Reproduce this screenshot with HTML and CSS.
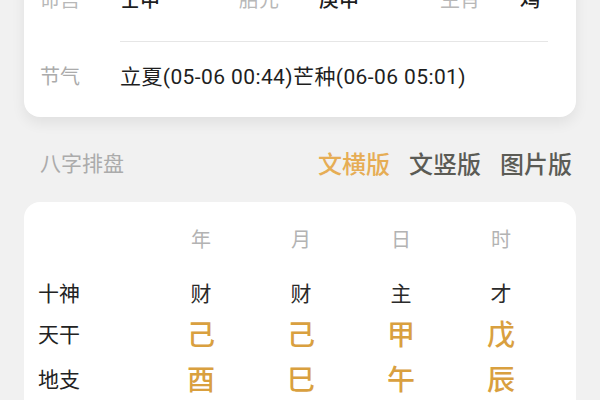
FILE: index.html
```html
<!DOCTYPE html>
<html lang="zh-CN">
<head>
<meta charset="utf-8">
<title>八字排盘</title>
<link rel="stylesheet" href="styles.css">
</head>
<body>
<div class="page">
  <section class="card info-card">
    <div class="info-row">
      <div class="pair"><span class="k">命宫</span><span class="v">壬申</span></div>
      <div class="pair"><span class="k">胎元</span><span class="v">庚申</span></div>
      <div class="pair"><span class="k">生肖</span><span class="v">鸡</span></div>
    </div>
    <div class="divider"></div>
    <div class="term-row">
      <span class="k">节气</span><span class="v">立夏(05-06 00:44)芒种(06-06 05:01)</span>
    </div>
  </section>

  <div class="section-head">
    <span class="section-title">八字排盘</span>
    <nav class="tabs">
      <span class="tab active">文横版</span>
      <span class="tab">文竖版</span>
      <span class="tab">图片版</span>
    </nav>
  </div>

  <section class="card chart-card">
    <div class="grid head">
      <span></span><span>年</span><span>月</span><span>日</span><span>时</span>
    </div>
    <div class="grid row-god">
      <span class="lbl">十神</span><span>财</span><span>财</span><span>主</span><span>才</span>
    </div>
    <div class="grid row-stem gold">
      <span class="lbl">天干</span><span>己</span><span>己</span><span>甲</span><span>戊</span>
    </div>
    <div class="grid row-branch gold">
      <span class="lbl">地支</span><span>酉</span><span>巳</span><span>午</span><span>辰</span>
    </div>
  </section>
</div>
</body>
</html>
```

FILE: styles.css
```css
* { box-sizing: border-box; }
html, body { margin: 0; padding: 0; }
body {
  background: #f1f1f1;
  font-family: Roboto, "Noto Sans CJK SC", sans-serif;
  color: #222;
  overflow: hidden;
  width: 600px;
  height: 400px;
}
.page { padding: 0 24px; }
.card {
  background: #fff;
  border-radius: 16px;
}
.info-card {
  margin-top: -44px;
  padding: 30px 28px 26px 14px;
  box-shadow: 0 6px 14px rgba(0,0,0,0.07);
}
.info-row {
  display: grid;
  grid-template-columns: 199px 201px 1fr;
  font-size: 20px;
  line-height: 28px;
  padding-left: 2px;
}
.pair { display: flex; }
.pair .k { width: 80px; color: #b8b8b8; }
.pair .v { color: #1e1e1e; font-weight: 500; }
.divider {
  margin: 27px 0 0 82px;
  height: 1px;
  background: #e6e6e6;
}
.term-row {
  display: flex;
  padding-top: 21px;
  font-size: 21px;
  line-height: 28px;
}
.term-row .k { width: 82px; color: #ababab; font-size: 20px; padding-left: 2px; }
.term-row .v { color: #1e1e1e; letter-spacing: 0.4px; }

.section-head {
  display: flex;
  justify-content: space-between;
  align-items: center;
  margin: 31px 4px 26px 16px;
  height: 28px;
}
.section-title { font-size: 21px; color: #ababab; }
.tabs { display: flex; gap: 19px; }
.tab { font-size: 24px; color: #5b5b55; font-weight: 500; }
.tab.active { color: #e6ad55; }

.chart-card {
  padding: 22px 0 0 14px;
  height: 220px;
}
.grid {
  display: grid;
  grid-template-columns: 113px repeat(4, 100px);
  align-items: center;
}
.grid span { text-align: center; }
.grid .lbl { text-align: left; color: #222; font-size: 21px; }
.head { height: 28px; font-size: 20px; color: #b3b3b3; margin-bottom: 20px; }
.row-god { height: 40px; font-size: 21px; color: #2a2a2a; }
.row-stem { height: 42px; }
.row-branch { height: 48px; }
.gold span { font-size: 28px; color: #d9a03f; font-weight: 500; }
.gold span.lbl { font-size: 21px; color: #222; font-weight: 400; }
```
